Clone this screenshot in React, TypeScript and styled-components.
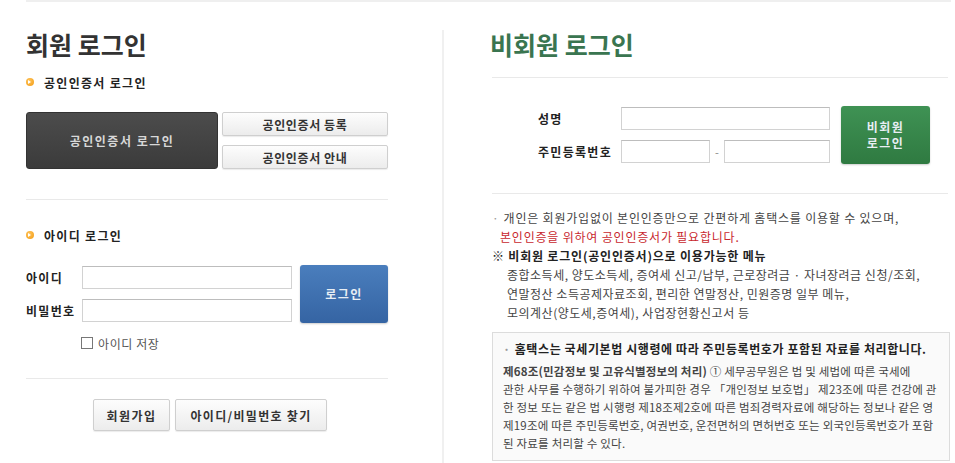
import React, { ReactElement } from "react";
import styled, { createGlobalStyle, css } from "styled-components";

const GlobalStyle = createGlobalStyle`
  body {
    margin: 0;
    background: #fff;
    font-family: "Noto Sans CJK KR", "Noto Sans", sans-serif;
    color: #333;
  }
`;

const Page = styled.div`
  margin-left: 26px;
  width: 925px;
  height: 463px;
  border-top: 2px solid #efefef;
  display: flex;
  overflow: hidden;
`;

const LeftCol = styled.div`
  width: 362px;
  padding-top: 27px;
  display: flex;
  flex-direction: column;
`;

const VLine = styled.div`
  width: 2px;
  margin: 28px 0 0 54px;
  background: #f0f0f0;
`;

const RightCol = styled.div`
  flex: 1;
  margin-left: 46px;
  padding-top: 27px;
  display: flex;
  flex-direction: column;
`;

const Title = styled.h2<{ $green?: boolean }>`
  margin: 0;
  font-size: 25px;
  line-height: 30px;
  font-weight: 700;
  color: ${(p) => (p.$green ? "#3a7550" : "#333")};
`;

const SubHead = styled.div<{ $top: number }>`
  display: flex;
  align-items: center;
  margin-top: ${(p) => p.$top}px;
  height: 16px;
  font-size: 12px;
  font-weight: 700;
  letter-spacing: 1.3px;
  color: #222;
`;

const Bullet = styled.span`
  width: 8px;
  height: 8px;
  border-radius: 50%;
  background: radial-gradient(circle at 40% 35%, #ffc45a, #f29a12);
  margin-right: 10px;
  position: relative;
  &::after {
    content: "";
    position: absolute;
    left: 2px;
    top: 2px;
    border: 2px solid transparent;
    border-left: 3px solid #fff;
    border-right: 0;
  }
`;

const Divider = styled.div<{ $top: number }>`
  margin-top: ${(p) => p.$top}px;
  border-top: 1px solid #e9e9e9;
`;

const RDivider = styled(Divider)`
  margin-left: 2px;
  margin-right: 3px;
`;

const CertRow = styled.div`
  display: flex;
  margin-top: 22px;
  gap: 4px;
`;

const DarkButton = styled.button`
  width: 193px;
  height: 57px;
  border: 1px solid #333;
  border-radius: 3px;
  background: linear-gradient(#4c4c4c, #3b3b3b);
  color: #d8d8d8;
  font: inherit;
  font-size: 12px;
  font-weight: 700;
  letter-spacing: 1.5px;
`;

const CertSide = styled.div`
  display: flex;
  flex-direction: column;
  gap: 9px;
`;

const lightButton = css`
  border: 1px solid #cfcfcf;
  border-radius: 2px;
  background: linear-gradient(#fdfdfd, #ececec);
  color: #333;
  font: inherit;
  font-size: 12px;
  font-weight: 700;
  box-shadow: 0 1px 1px rgba(0, 0, 0, 0.08);
`;

const LightButton = styled.button<{ $w: number; $h: number; $ls: number }>`
  ${lightButton}
  width: ${(p) => p.$w}px;
  height: ${(p) => p.$h}px;
  letter-spacing: ${(p) => p.$ls}px;
`;

const FormRow = styled.div<{ $top: number; $indent?: number }>`
  display: flex;
  margin-top: ${(p) => p.$top}px;
  padding-left: ${(p) => p.$indent || 0}px;
`;

const Fields = styled.div`
  display: flex;
  flex-direction: column;
  gap: 10px;
  padding-top: 1px;
`;

const Field = styled.div`
  display: flex;
  align-items: center;
  height: 23px;
`;

const Label = styled.label<{ $w: number }>`
  width: ${(p) => p.$w}px;
  font-size: 12px;
  font-weight: 700;
  letter-spacing: 1.3px;
  color: #222;
`;

const Input = styled.input<{ $w: number }>`
  box-sizing: border-box;
  width: ${(p) => p.$w}px;
  height: 23px;
  border: 1px solid #d2d2d2;
  border-top-color: #bdbdbd;
  background: #fff;
  padding: 0 4px;
`;

const Dash = styled.span`
  width: 14px;
  text-align: center;
  font-size: 11px;
  color: #888;
`;

const ColorButton = styled.button<{ $bg: string; $w: number; $ml: number }>`
  width: ${(p) => p.$w}px;
  height: 58px;
  margin-left: ${(p) => p.$ml}px;
  border: 0;
  border-radius: 3px;
  background: ${(p) => p.$bg};
  color: #e8eef4;
  font: inherit;
  font-size: 12px;
  font-weight: 700;
  letter-spacing: 1.5px;
  line-height: 16px;
  box-shadow: 0 1px 2px rgba(0, 0, 0, 0.2);
`;

const SaveRow = styled.label`
  display: flex;
  align-items: center;
  margin: 14px 0 0 55px;
  height: 12px;
  font-size: 12px;
  color: #555;
  letter-spacing: 0.6px;
`;

const Check = styled.span`
  box-sizing: border-box;
  width: 12px;
  height: 12px;
  border: 1px solid #777;
  background: #fff;
  margin-right: 5px;
`;

const BottomRow = styled.div`
  display: flex;
  justify-content: center;
  gap: 5px;
  margin-top: 20px;
  padding-left: 6px;
`;

const Notes = styled.div`
  margin: 14px 0 0 2px;
  font-size: 12px;
  letter-spacing: 0.8px;
  line-height: 19px;
  color: #444;
  white-space: nowrap;
`;

const NoteLine = styled.div<{ $red?: boolean; $indent?: number }>`
  padding-left: ${(p) => p.$indent || 0}px;
  color: ${(p) => (p.$red ? "#c8282e" : "#444")};
`;

const Dot = styled.span`
  color: #999;
  margin-right: 4px;
`;

const NoteHead = styled.div`
  font-weight: 700;
  color: #222;
`;

const MenuList = styled.div`
  padding-left: 15px;
  letter-spacing: 0.5px;
  color: #444;
`;

const InfoBox = styled.div`
  margin: 10px 1px 0 2px;
  border: 1px solid #dcdcdc;
  background: #fafafa;
  padding: 7px 10px 8px;
  font-size: 11.5px;
  color: #333;
  white-space: nowrap;
`;

const InfoHead = styled.div`
  line-height: 18px;
  font-size: 12px;
  font-weight: 700;
  letter-spacing: 0.6px;
  color: #222;
`;

const InfoBody = styled.div`
  margin-top: 4px;
  line-height: 18px;
  letter-spacing: 0.2px;
  color: #444;
`;

export default function App(): ReactElement {
  return (
    <>
      <GlobalStyle />
      <Page>
        <LeftCol>
          <Title>회원 로그인</Title>
          <SubHead $top={15}>
            <Bullet />
            공인인증서 로그인
          </SubHead>
          <CertRow>
            <DarkButton>공인인증서 로그인</DarkButton>
            <CertSide>
              <LightButton $w={166} $h={24} $ls={0.6}>공인인증서 등록</LightButton>
              <LightButton $w={166} $h={24} $ls={0.6}>공인인증서 안내</LightButton>
            </CertSide>
          </CertRow>
          <Divider $top={30} />
          <SubHead $top={27}>
            <Bullet />
            아이디 로그인
          </SubHead>
          <FormRow $top={22}>
            <Fields>
              <Field>
                <Label $w={56}>아이디</Label>
                <Input $w={210} />
              </Field>
              <Field>
                <Label $w={56}>비밀번호</Label>
                <Input $w={210} type="password" />
              </Field>
            </Fields>
            <ColorButton $bg="linear-gradient(#4a7ebd, #3564a3)" $w={88} $ml={8}>
              로그인
            </ColorButton>
          </FormRow>
          <SaveRow>
            <Check />
            아이디 저장
          </SaveRow>
          <Divider $top={29} />
          <BottomRow>
            <LightButton $w={77} $h={32} $ls={1.5}>회원가입</LightButton>
            <LightButton $w={152} $h={32} $ls={1.3}>아이디/비밀번호 찾기</LightButton>
          </BottomRow>
        </LeftCol>

        <VLine />

        <RightCol>
          <Title $green>비회원 로그인</Title>
          <RDivider $top={18} />
          <FormRow $top={28} $indent={48}>
            <Fields>
              <Field>
                <Label $w={83}>성명</Label>
                <Input $w={209} />
              </Field>
              <Field>
                <Label $w={83}>주민등록번호</Label>
                <Input $w={89} />
                <Dash>-</Dash>
                <Input $w={106} />
              </Field>
            </Fields>
            <ColorButton $bg="linear-gradient(#3f9254, #2f7a41)" $w={89} $ml={11}>
              비회원
              <br />
              로그인
            </ColorButton>
          </FormRow>
          <RDivider $top={29} />
          <Notes>
            <NoteLine>
              <Dot>·</Dot>개인은 회원가입없이 본인인증만으로 간편하게 홈택스를 이용할 수 있으며,
            </NoteLine>
            <NoteLine $red $indent={8}>
              본인인증을 위하여 공인인증서가 필요합니다.
            </NoteLine>
            <NoteHead>※ 비회원 로그인(공인인증서)으로 이용가능한 메뉴</NoteHead>
            <MenuList>
              종합소득세, 양도소득세, 증여세 신고/납부, 근로장려금 · 자녀장려금 신청/조회,
              <br />
              연말정산 소득공제자료조회, 편리한 연말정산, 민원증명 일부 메뉴,
              <br />
              모의계산(양도세,증여세), 사업장현황신고서 등
            </MenuList>
          </Notes>
          <InfoBox>
            <InfoHead>
              <Dot>·</Dot>홈택스는 국세기본법 시행령에 따라 주민등록번호가 포함된 자료를 처리합니다.
            </InfoHead>
            <InfoBody>
              <b>제68조(민감정보 및 고유식별정보의 처리)</b> ① 세무공무원은 법 및 세법에 따른 국세에
              <br />
              관한 사무를 수행하기 위하여 불가피한 경우 「개인정보 보호법」 제23조에 따른 건강에 관
              <br />
              한 정보 또는 같은 법 시행령 제18조제2호에 따른 범죄경력자료에 해당하는 정보나 같은 영
              <br />
              제19조에 따른 주민등록번호, 여권번호, 운전면허의 면허번호 또는 외국인등록번호가 포함
              <br />
              된 자료를 처리할 수 있다.
            </InfoBody>
          </InfoBox>
        </RightCol>
      </Page>
    </>
  );
}
